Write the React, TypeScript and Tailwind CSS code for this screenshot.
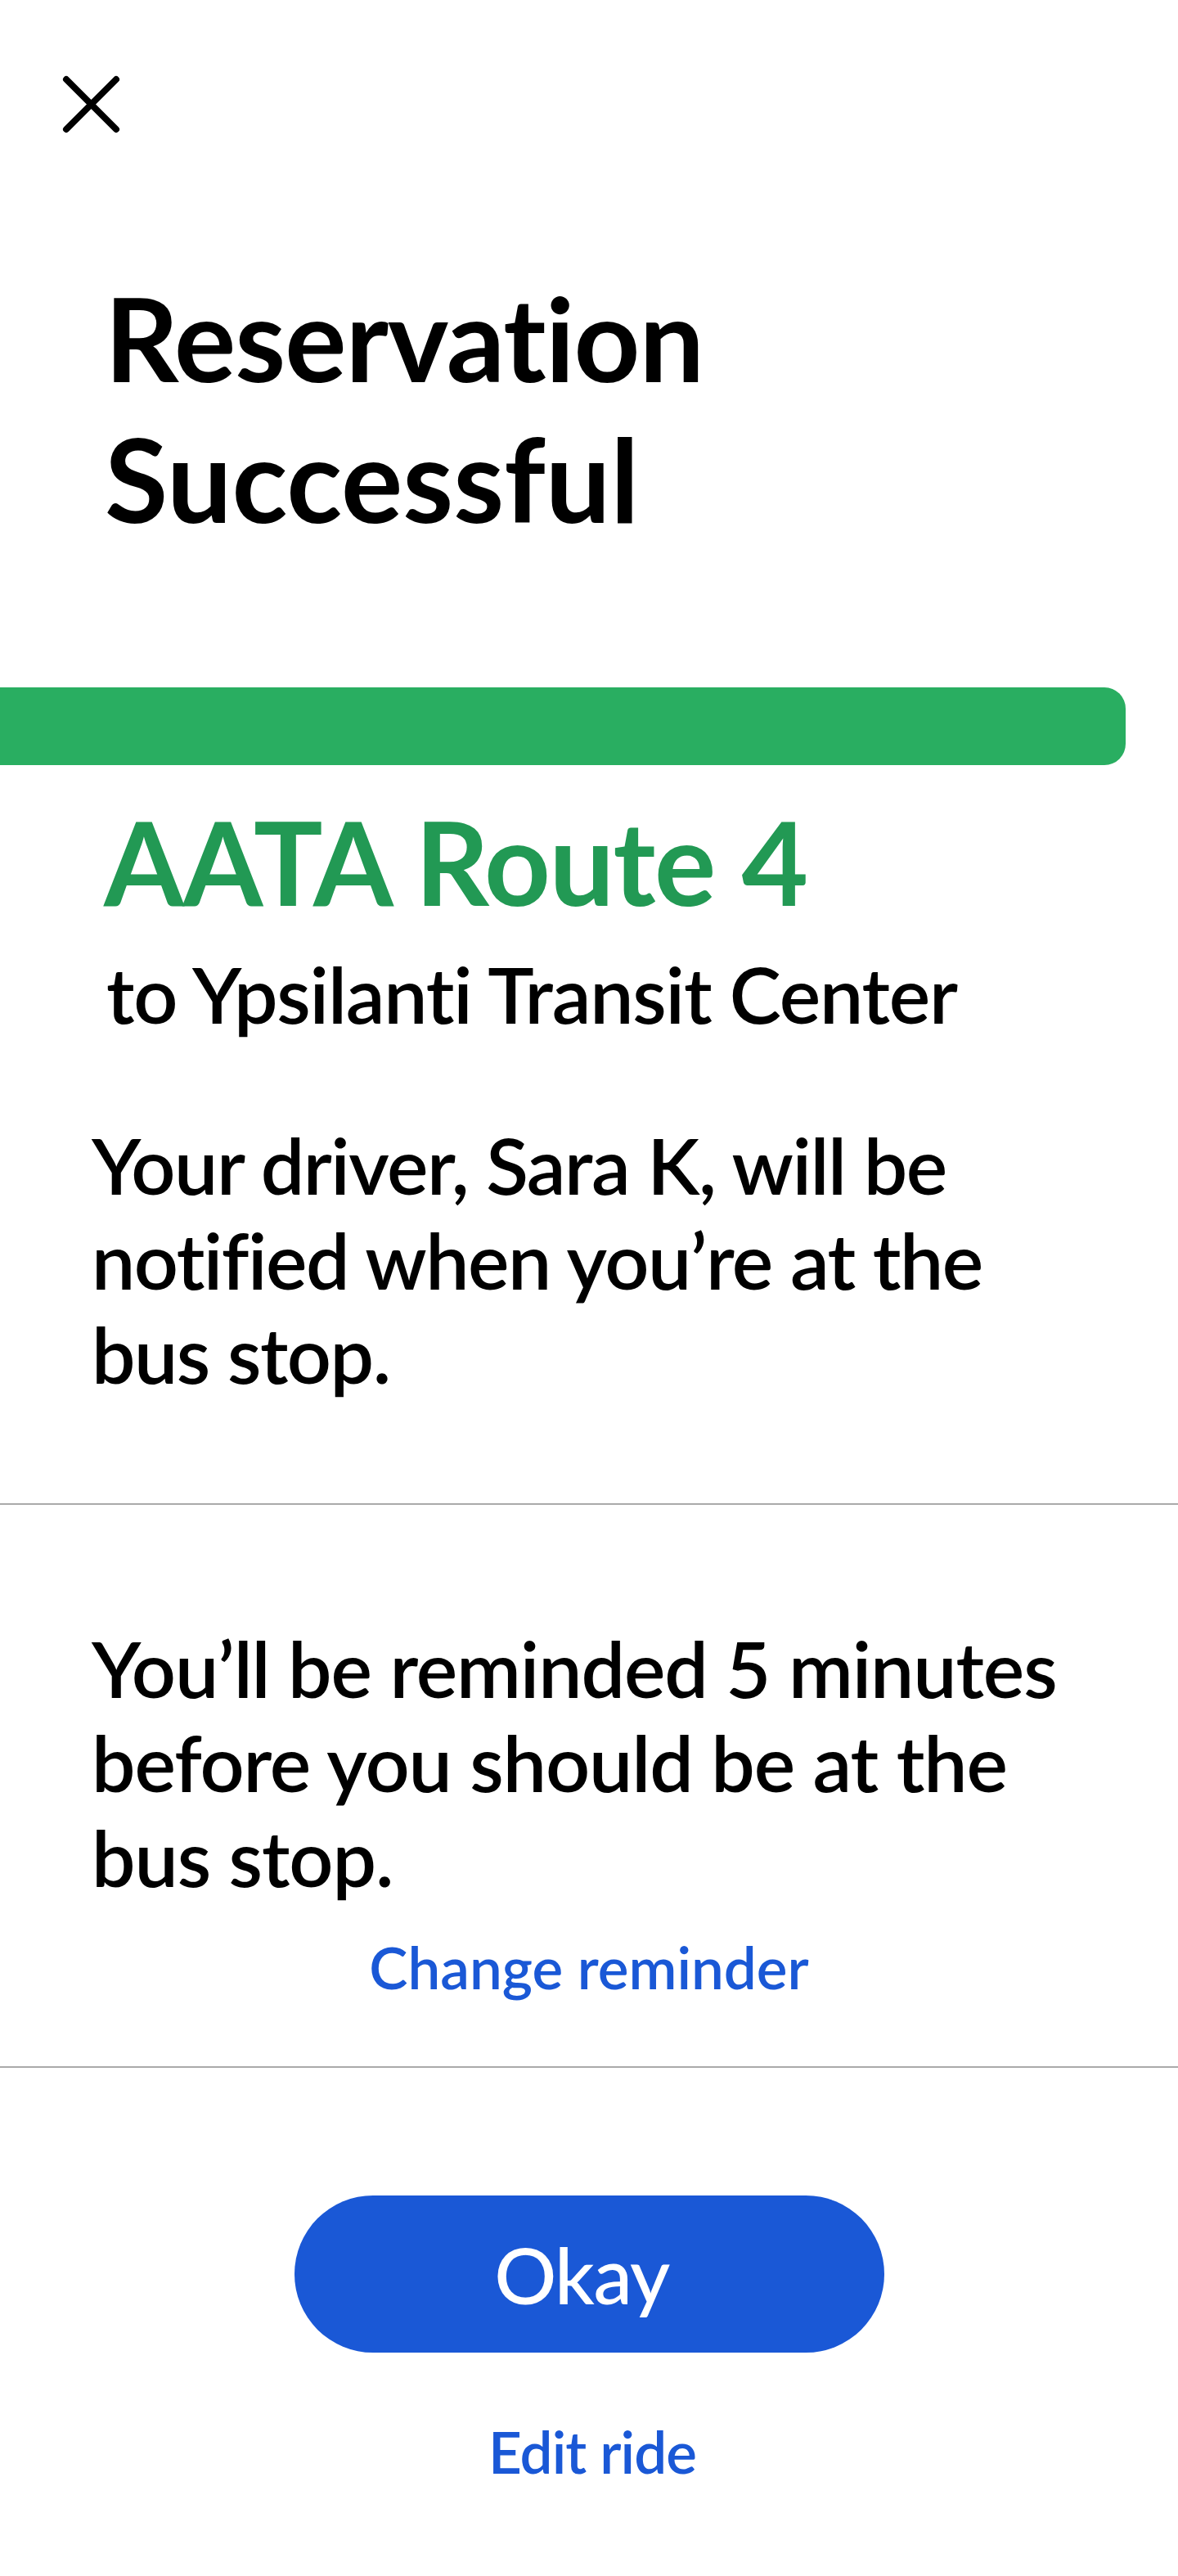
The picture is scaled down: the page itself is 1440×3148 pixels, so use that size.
import React from "react";

export default function App() {
  return (
    <div className="w-[1440px] min-h-[3148px] bg-white text-black font-['Lato','Open_Sans',sans-serif] [font-variant-ligatures:none] flex flex-col">
      <div className="pt-[92px] pl-[76px]">
        <svg width="71" height="71" viewBox="0 0 71 71" fill="none">
          <path d="M5 5 L66 66 M66 5 L5 66" stroke="#000" strokeWidth="8" strokeLinecap="round" />
        </svg>
      </div>
      <h1 className="mt-[164px] pl-[128px] text-[141px] leading-[172px] font-bold">
        <span className="tracking-[-1px]">Reservation</span>
        <br />
        <span className="tracking-[0px]">Successful</span>
      </h1>
      <div className="mt-[169px] h-[95px] w-[1376px] bg-[#29ae61] rounded-r-[26px]" />
      <h2 className="mt-[32px] pl-[127px] text-[141px] leading-[172px] font-bold text-[#229954] tracking-[-1.5px]">
        AATA Route 4
      </h2>
      <p className="mt-[18px] pl-[130px] text-[95px] leading-[115px] font-semibold tracking-[-1.2px]">
        to Ypsilanti Transit Center
      </p>
      <p className="mt-[94px] pl-[112px] text-[95px] leading-[115.5px] font-semibold tracking-[-1.5px]">
        Your driver, Sara K, will be
        <br />
        notified when you’re at the
        <br />
        bus stop.
      </p>
      <div className="mt-[124px] h-[2px] w-full bg-[#aaaaaa]" />
      <p className="mt-[142px] pl-[112px] text-[95px] leading-[115.5px] font-semibold tracking-[-1.1px]">
        You’ll be reminded 5 minutes
        <br />
        before you should be at the
        <br />
        bus stop.
      </p>
      <div className="mt-[34px] text-center text-[71px] leading-[85px] font-semibold text-[#1a58d6]">
        Change reminder
      </div>
      <div className="mt-[79px] h-[2px] w-full bg-[#aaaaaa]" />
      <div className="mt-[156px] flex justify-center">
        <button className="w-[721px] h-[192px] rounded-full bg-[#1a58d6] text-white text-[95px] font-medium tracking-[-1.5px] pr-[18px] flex items-center justify-center">
          Okay
        </button>
      </div>
      <div className="mt-[78px] pl-[8px] text-center text-[71px] leading-[85px] font-semibold text-[#1a58d6] tracking-[-0.9px]">
        Edit ride
      </div>
    </div>
  );
}
